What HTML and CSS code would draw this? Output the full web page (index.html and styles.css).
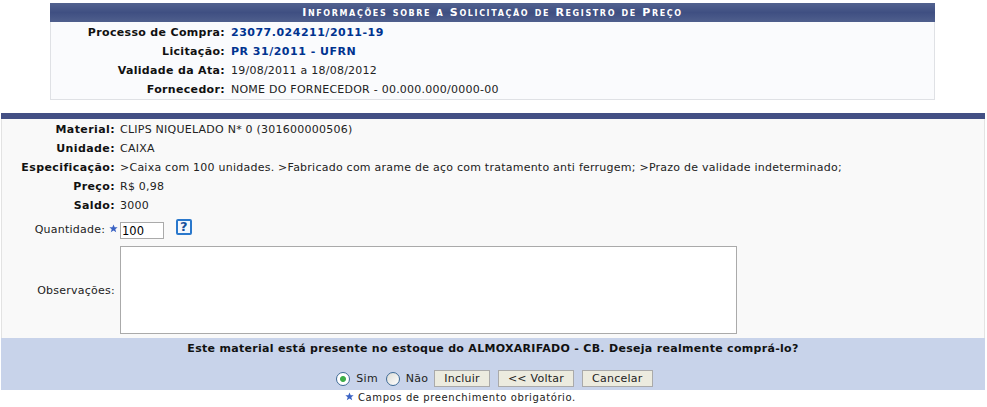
FILE: index.html
```html
<!DOCTYPE html>
<html lang="pt-BR">
<head>
  <meta charset="UTF-8" />
  <title>Solicitação de Registro de Preço</title>
  <link rel="stylesheet" href="styles.css">
</head>
<body>
  <section class="info">
    <h2 class="info-title">Informações sobre a Solicitação de Registro de Preço</h2>
    <div class="info-body">
      <div class="info-label">Processo de Compra:</div>
      <div><a class="link" href="#">23077.024211/2011-19</a></div>
      <div class="info-label">Licitação:</div>
      <div><a class="link" href="#">PR 31/2011 - UFRN</a></div>
      <div class="info-label">Validade da Ata:</div>
      <div>19/08/2011 a 18/08/2012</div>
      <div class="info-label">Fornecedor:</div>
      <div>NOME DO FORNECEDOR - 00.000.000/0000-00</div>
    </div>
  </section>

  <form class="form" onsubmit="event.preventDefault();">
    <div class="fields">
      <div class="field-label">Material:</div>
      <div>CLIPS NIQUELADO N* 0 (301600000506)</div>
      <div class="field-label">Unidade:</div>
      <div>CAIXA</div>
      <div class="field-label">Especificação:</div>
      <div>&gt;Caixa com 100 unidades. &gt;Fabricado com arame de aço com tratamento anti ferrugem; &gt;Prazo de validade indeterminado;</div>
      <div class="field-label">Preço:</div>
      <div>R$ 0,98</div>
      <div class="field-label">Saldo:</div>
      <div>3000</div>
      <label class="input-label qty-label" for="qtd">Quantidade:
        <svg class="star" viewBox="0 0 10 10"><path d="M5 .5l1.300 3H9.600L7 5.700l1 3.600-3-2-3 2 1-3.600L.4 3.500h3.300z"/></svg>
      </label>
      <div class="qty">
        <input class="text-input" id="qtd" type="text" value="100">
        <a class="help" href="#">?</a>
      </div>
      <label class="input-label obs-label" for="obs">Observações:</label>
      <div><textarea class="obs-input" id="obs"></textarea></div>
    </div>
    <div class="footer">
      <p class="question">Este material está presente no estoque do ALMOXARIFADO - CB. Deseja realmente comprá-lo?</p>
      <div class="actions">
        <label class="radio-item"><span class="radio checked"></span>Sim</label>
        <label class="radio-item"><span class="radio"></span>Não</label>
        <button class="btn" type="button">Incluir</button>
        <button class="btn" type="button">&lt;&lt; Voltar</button>
        <button class="btn" type="button">Cancelar</button>
      </div>
    </div>
  </form>

  <p class="note">
    <svg class="star" viewBox="0 0 10 10"><path d="M5 .5l1.300 3H9.600L7 5.700l1 3.600-3-2-3 2 1-3.600L.4 3.500h3.300z"/></svg>
    Campos de preenchimento obrigatório.
  </p>
</body>
</html>
```

FILE: styles.css
```css
body {
  margin: 0;
  padding: 3px 0 0;
  font-family: "DejaVu Sans", Verdana, sans-serif;
  font-size: 11px;
  line-height: 19px;
  letter-spacing: .24px;
  color: #222;
  background-color: #fff;
}
.info {
  width: 885px;
  margin-left: 50px;
}
.info-title {
  margin: 0;
  height: 19px;
  font-size: 11px;
  font-weight: bold;
  font-variant: small-caps;
  letter-spacing: 1.62px;
  line-height: 19px;
  text-align: center;
  color: #fff;
  background: linear-gradient(#52628f, #3f4f82 50%, #4f5f8d);
}
.info-body {
  display: grid;
  grid-template-columns: 174px 1fr;
  grid-auto-rows: 19px;
  column-gap: 6px;
  height: 78px;
  padding-top: 1px;
  box-sizing: border-box;
  background-color: #fafbfd;
  border: 1px solid #dfe1e5;
  border-top: 0;
}
.info-label {
  text-align: right;
  font-weight: bold;
  letter-spacing: .33px;
  color: #111;
}
.link {
  font-weight: bold;
  letter-spacing: .5px;
  color: #003390;
  text-decoration: none;
}
.form {
  margin: 13px 2px 0 1px;
  border-top: 6px solid #434f84;
}
.fields {
  display: grid;
  grid-template-columns: 113px 1fr;
  grid-template-rows: repeat(5, 19px) 31px 88px;
  column-gap: 5px;
  height: 219px;
  padding-top: 1px;
  box-sizing: border-box;
  background-color: #f9f9f9;
  border: 1px solid #e3e3e3;
  border-width: 0 1px;
}
.field-label {
  text-align: right;
  font-weight: bold;
  letter-spacing: .4px;
  color: #111;
}
.input-label {
  text-align: right;
  color: #222;
}
.qty-label {
  margin-right: -3px;
  margin-top: 5px;
}
.star {
  width: 9px;
  height: 9px;
  fill: #3b63c4;
}
.qty {
  display: flex;
  align-items: flex-start;
  gap: 12px;
}
.text-input {
  width: 44px;
  height: 17px;
  margin-top: 7px;
  padding: 1px;
  box-sizing: border-box;
  border: 1px solid #aaa;
  font: 11.500px "DejaVu Sans", Verdana, sans-serif;
  color: #000;
}
.help {
  width: 16px;
  height: 16px;
  margin-top: 4px;
  box-sizing: border-box;
  border: 2px solid #2a78cc;
  border-radius: 2px;
  background-color: #f4f8fd;
  font-size: 13px;
  font-weight: bold;
  line-height: 12px;
  text-align: center;
  color: #14509c;
  text-decoration: none;
}
.obs-label {
  align-self: center;
}
.obs-input {
  display: block;
  width: 617px;
  height: 88px;
  box-sizing: border-box;
  border: 1px solid #aaa;
  background-color: #fff;
  resize: none;
}
.footer {
  height: 52px;
  background-color: #c8d3ea;
  text-align: center;
}
.question {
  margin: 0;
  padding-top: 1px;
  font-weight: bold;
  letter-spacing: .3px;
  color: #111;
}
.actions {
  display: flex;
  justify-content: center;
  align-items: center;
  height: 17px;
  margin-top: 12px;
  margin-left: 3px;
}
.radio-item {
  display: flex;
  align-items: center;
  margin-right: 8px;
}
.radio-item + .radio-item {
  margin-right: 6px;
}
.radio {
  width: 14px;
  height: 14px;
  margin-right: 6px;
  box-sizing: border-box;
  border: 1px solid #3f6b96;
  border-radius: 50%;
  background: linear-gradient(135deg, #dcdcd6, #fff);
}
.radio.checked {
  background: radial-gradient(circle, #3fae4a 0 2.500px, #fff 3.500px);
}
.btn {
  height: 17px;
  margin-right: 8px;
  padding: 0 9px;
  border: 1px solid #aaa;
  background-color: #ecebdf;
  font: 11px "DejaVu Sans", Verdana, sans-serif;
  letter-spacing: .25px;
  color: #222;
}
.btn:last-child {
  margin-right: 0;
}
.note {
  margin: 0;
  padding: 1px 66px 0 0;
  text-align: center;
  font-size: 10px;
  line-height: 14px;
  letter-spacing: .6px;
}
```
